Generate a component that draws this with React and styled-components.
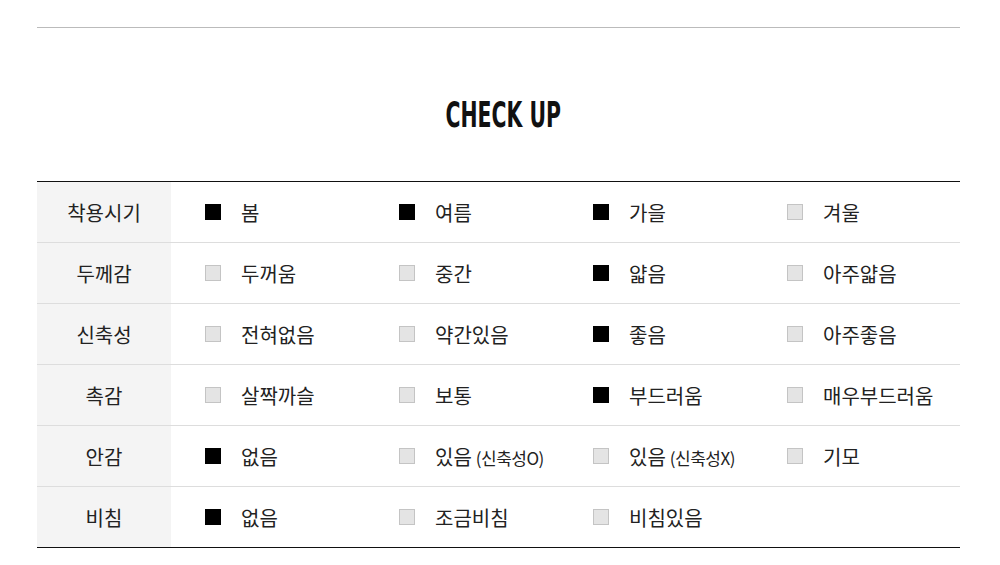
import React from 'react';
import styled, { createGlobalStyle } from 'styled-components';

const GlobalStyle = createGlobalStyle`
  body {
    margin: 0;
    background: #fff;
    font-family: "Noto Sans CJK KR", "Noto Sans", sans-serif;
    color: #222;
  }
`;

const Wrapper = styled.div`
  margin: 0 40px 0 37px;
  padding-top: 27px;
`;

const TopRule = styled.div`
  border-top: 1px solid #bbb;
`;

const Title = styled.h2`
  margin: 0;
  padding: 69px 0 0 15px;
  height: 88px;
  box-sizing: border-box;
  text-align: center;
  font-family: "DejaVu Sans Condensed", "DejaVu Sans", sans-serif;
  font-weight: bold;
  font-size: 36px;
  line-height: 1;
  color: #111;
  transform: scaleX(0.63);
`;

const Table = styled.div`
  margin-top: 65px;
  border-top: 1px solid #111;
  border-bottom: 1px solid #111;
`;

const Row = styled.div`
  display: flex;
  height: 60px;
  & + & {
    border-top: 1px solid #ddd;
  }
`;

const Label = styled.div`
  width: 134px;
  flex: none;
  background: #f4f4f4;
  display: flex;
  align-items: center;
  justify-content: center;
  font-size: 20px;
  color: #222;
`;

const Options = styled.div`
  display: grid;
  grid-template-columns: repeat(4, 194px);
  padding-left: 34px;
  align-items: center;
`;

const Option = styled.div`
  display: flex;
  align-items: center;
  gap: 20px;
  font-size: 20px;
  color: #222;
  white-space: nowrap;
`;

const Box = styled.span`
  width: 16px;
  height: 16px;
  box-sizing: border-box;
  flex: none;
  background: ${(p) => (p.$on ? '#000' : '#e4e4e4')};
  border: 1px solid ${(p) => (p.$on ? '#000' : '#c4c4c4')};
`;

const Small = styled.span`
  font-size: 17px;
  letter-spacing: -0.5px;
  margin-left: 4px;
`;

const rows = [
  { label: '착용시기', opts: [['봄', 1], ['여름', 1], ['가을', 1], ['겨울', 0]] },
  { label: '두께감', opts: [['두꺼움', 0], ['중간', 0], ['얇음', 1], ['아주얇음', 0]] },
  { label: '신축성', opts: [['전혀없음', 0], ['약간있음', 0], ['좋음', 1], ['아주좋음', 0]] },
  { label: '촉감', opts: [['살짝까슬', 0], ['보통', 0], ['부드러움', 1], ['매우부드러움', 0]] },
  {
    label: '안감',
    opts: [['없음', 1], ['있음', 0, '(신축성O)'], ['있음', 0, '(신축성X)'], ['기모', 0]],
  },
  { label: '비침', opts: [['없음', 1], ['조금비침', 0], ['비침있음', 0]] },
];

const App = () => {
  return (
    <Wrapper>
      <GlobalStyle />
      <TopRule />
      <Title>CHECK UP</Title>
      <Table>
        {rows.map((row) => (
          <Row key={row.label}>
            <Label>{row.label}</Label>
            <Options>
              {row.opts.map(([text, on, extra], i) => (
                <Option key={i}>
                  <Box $on={!!on} />
                  <span>
                    {text}
                    {extra && <Small>{extra}</Small>}
                  </span>
                </Option>
              ))}
            </Options>
          </Row>
        ))}
      </Table>
    </Wrapper>
  );
};

export default App;
